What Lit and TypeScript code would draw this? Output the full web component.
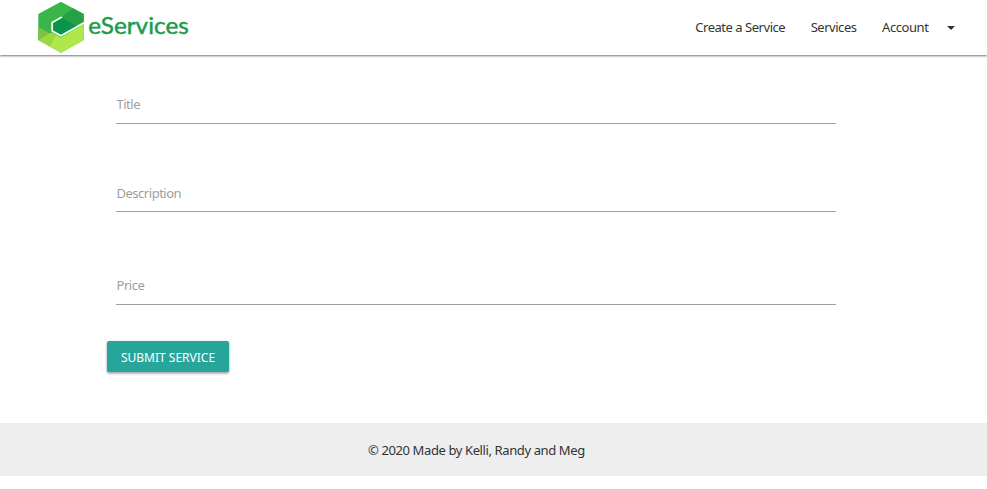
import { LitElement, html, css } from "lit";
import { customElement } from "lit/decorators.js";

@customElement("app-header")
class AppHeader extends LitElement {
  static styles = css`
    :host { display: flex; height: 55px; justify-content: space-between; background: #fff;
      box-shadow: 0 1px 2px rgba(0,0,0,.55); box-sizing: border-box; padding: 0 32px 0 38px; }
    .logo { display: block; width: 155px; height: 55px; }
    .word { font: 400 23px "Lato", sans-serif; fill: #1c9b4c; stroke: #1c9b4c; stroke-width: .45; }
    nav { display: flex; align-items: center; color: #343434; font-size: 13px; line-height: 20px; }
    a { margin-right: 25.5px; padding-bottom: 2px; white-space: nowrap; letter-spacing: -.47px; }
    .account { margin-right: 18.5px; letter-spacing: -.42px; }
    .caret { border: 4px solid transparent; border-top-color: #333; border-bottom: 0; }
  `;
  render() {
    return html`
      <svg class="logo" viewBox="38 0 155 55">
        <path fill="#39b54a" d="M38.3 14 61 1.7 83.7 14V40L61 52.7 38.3 40z"/>
        <path fill="#27a148" d="M61 17 73 8.3 83.7 14V22L72 28z"/>
        <path fill="#7fc241" d="M38.3 27 52 34.5 50 46.5 38.3 40z"/>
        <path fill="#aee84b" d="M38.3 40 52 32.5 61 37.5 83.7 24V40L61 52.7z"/>
        <path fill="#8ccc3e" d="M38.3 40 52 32.5 56 35 50 46.5z" opacity=".55"/>
        <path fill="#07964a" d="M52.3 22.5 61 17.5 77 26.5 61 35.5 52.3 31z"/>
        <path fill="none" stroke="#fff" stroke-width="1.7" d="M62 17 52.2 22.5V31L61 35.8 84 22.8"/>
        <text class="word" x="88.3" y="34" textLength="100.5" lengthAdjust="spacingAndGlyphs">eServices</text>
      </svg>
      <nav><a>Create a Service</a><a>Services</a><a class="account">Account</a><span class="caret"></span></nav>`;
  }
}

@customElement("app-root")
class AppRoot extends LitElement {
  static styles = css`
    :host { display: block; height: 489px; overflow: hidden; background: #fff; font-family: "Noto Sans", sans-serif; font-size: 13px; }
    main { display: flex; flex-direction: column; height: 368px; box-sizing: border-box; padding: 39px 151px 0 116px; }
    .field { box-sizing: border-box; height: 30px; border-bottom: 1px solid #9e9e9e; color: #9e9e9e; line-height: 20px; letter-spacing: -.48px; text-indent: .5px; }
    .desc { margin-top: 58px; line-height: 22px; }
    .price { margin-top: 63px; }
    button { align-self: flex-start; margin: 36px 0 0 -9px; width: 122px; height: 31px; padding: 0; border: 0; border-radius: 2px; background: #26a69a; color: #fff;
      font: 12px/33px "Noto Sans", sans-serif; white-space: nowrap; box-shadow: 0 2px 2px rgba(0,0,0,.14), 0 1px 3px rgba(0,0,0,.3); }
    footer { height: 53px; background: #eee; color: #333; line-height: 55px; padding-left: 368px; letter-spacing: -.39px; }
  `;
  render() {
    return html`
      <app-header></app-header>
      <main>
        <div class="field">Title</div>
        <div class="field desc">Description</div>
        <div class="field price">Price</div>
        <button>SUBMIT SERVICE</button>
      </main>
      <footer>© 2020 Made by Kelli, Randy and Meg</footer>`;
  }
}
